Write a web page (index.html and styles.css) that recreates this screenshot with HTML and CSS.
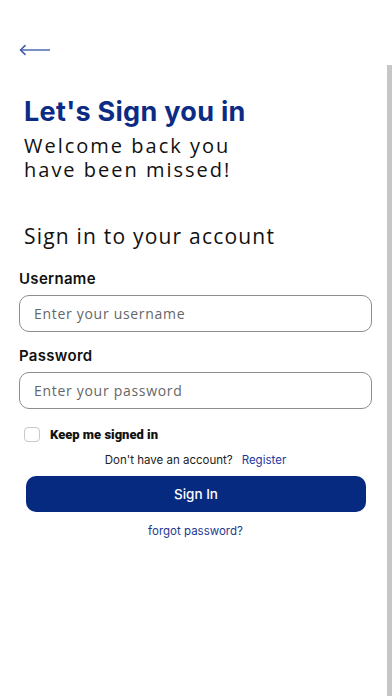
FILE: index.html
```html
<!DOCTYPE html>
<html lang="en">
<head>
<meta charset="utf-8">
<meta name="viewport" content="width=device-width, initial-scale=1">
<title>Sign in</title>
<link rel="stylesheet" href="styles.css">
</head>
<body>
<div class="screen">
  <div class="topbar">
    <svg class="back" width="32" height="12" viewBox="0 0 32 12" aria-hidden="true">
      <path d="M1.5 6 H31" stroke="#3f5da8" stroke-width="1.4" fill="none"/>
      <path d="M6 1.6 L1.5 6 L6 10.4" stroke="#3f5da8" stroke-width="1.6" fill="none" stroke-linecap="round" stroke-linejoin="round"/>
    </svg>
  </div>
  <header class="intro">
    <h1 class="title">Let's Sign you in</h1>
    <p class="welcome"><span class="wl">Welcome back you</span><span class="wl">have been missed!</span></p>
  </header>
  <h2 class="subtitle">Sign in to your account</h2>
  <form class="form">
    <label class="label" for="u">Username</label>
    <input class="field" id="u" type="text" placeholder="Enter your username">
    <label class="label label-pw" for="p">Password</label>
    <input class="field" id="p" type="password" placeholder="Enter your password">
    <div class="keep">
      <span class="box"></span>
      <span class="keep-text">Keep me signed in</span>
    </div>
    <p class="register">Don't have an account?<a class="reg-link" href="#">Register</a></p>
    <button class="btn" type="button">Sign In</button>
    <a class="forgot" href="#">forgot password?</a>
  </form>
  <div class="scrollbar"></div>
</div>
</body>
</html>
```
FILE: styles.css
```css
* { box-sizing: border-box; }
html, body { margin: 0; padding: 0; background: #ffffff; }
body { font-family: "Inter", "Liberation Sans", sans-serif; color: #111; }
.screen { position: relative; width: 392px; height: 696px; overflow: hidden; }
.topbar { padding: 44px 0 0 19px; height: 57px; }
.back { display: block; }
.intro { padding: 38px 0 0 24px; }
.title { margin: 0; font-family: "Inter", sans-serif; font-weight: 700; font-size: 27px; line-height: 34px; color: #0b2b84; letter-spacing: 0.3px; }
.welcome { margin: 5px 0 0; display: flex; flex-direction: column; font-family: "Open Sans", sans-serif; font-size: 20px; line-height: 24px; letter-spacing: 2px; color: #111; }
.wl { display: block; height: 24px; }
.subtitle { margin: 41px 0 0 24px; font-family: "Open Sans", sans-serif; font-weight: 400; font-size: 21px; line-height: 26px; letter-spacing: 1.2px; color: #111; }
.form { display: flex; flex-direction: column; padding: 0 20px 0 19px; margin-top: 21px; }
.label { font-family: "Inter", sans-serif; font-weight: 600; font-size: 15px; line-height: 18px; letter-spacing: 0.3px; color: #111; }
.label-pw { margin-top: 15px; }
.field { margin-top: 7px; height: 37px; width: 353px; border: 1px solid #8d8d8d; border-radius: 10px; padding: 0 14px; font-family: "Open Sans", sans-serif; font-size: 14px; letter-spacing: 0.7px; color: #333; background: #fff; outline: none; }
.field::placeholder { color: #666; }
.keep { display: flex; align-items: center; margin: 18px 0 0 5px; }
.box { width: 16px; height: 15px; border: 1px solid #c9c9c9; border-radius: 4px; }
.keep-text { margin-left: 10px; font-family: "Roboto", sans-serif; font-weight: 900; font-size: 13px; color: #111; }
.register { margin: 10px 0 0; text-align: center; font-family: "Inter", sans-serif; font-size: 11.5px; line-height: 16px; color: #222; }
.reg-link { margin-left: 9px; color: #1a3a9c; text-decoration: none; }
.btn { margin: 8px 6px 0 7px; height: 36px; border: none; border-radius: 10px; background: #062a80; color: #fff; font-family: "Inter", sans-serif; font-size: 13.5px; font-weight: 500; }
.forgot { margin-top: 12px; align-self: center; font-family: "Inter", sans-serif; font-size: 11.5px; color: #1c3a90; text-decoration: none; }
.scrollbar { position: absolute; top: 65px; right: 0; width: 5px; bottom: 0; background: #c6c6c6; }
```
